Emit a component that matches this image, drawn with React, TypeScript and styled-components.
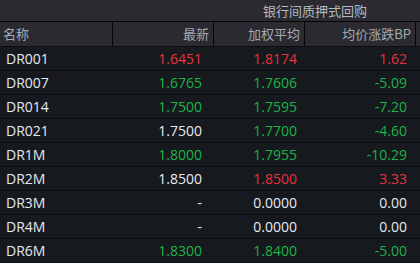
import React, {FC} from 'react';
import styled, {createGlobalStyle} from "styled-components";

type Tone = 'up' | 'down' | 'flat';

interface Row {
    name: string;
    last: string;
    lastTone: Tone;
    avg: string;
    avgTone: Tone;
    bp: string;
    bpTone: Tone;
}

const rows: Row[] = [
    {name: 'DR001', last: '1.6451', lastTone: 'up', avg: '1.8174', avgTone: 'up', bp: '1.62', bpTone: 'up'},
    {name: 'DR007', last: '1.6765', lastTone: 'down', avg: '1.7606', avgTone: 'down', bp: '-5.09', bpTone: 'down'},
    {name: 'DR014', last: '1.7500', lastTone: 'down', avg: '1.7595', avgTone: 'down', bp: '-7.20', bpTone: 'down'},
    {name: 'DR021', last: '1.7500', lastTone: 'flat', avg: '1.7700', avgTone: 'down', bp: '-4.60', bpTone: 'down'},
    {name: 'DR1M', last: '1.8000', lastTone: 'down', avg: '1.7955', avgTone: 'down', bp: '-10.29', bpTone: 'down'},
    {name: 'DR2M', last: '1.8500', lastTone: 'flat', avg: '1.8500', avgTone: 'up', bp: '3.33', bpTone: 'up'},
    {name: 'DR3M', last: '-', lastTone: 'flat', avg: '0.0000', avgTone: 'flat', bp: '0.00', bpTone: 'flat'},
    {name: 'DR4M', last: '-', lastTone: 'flat', avg: '0.0000', avgTone: 'flat', bp: '0.00', bpTone: 'flat'},
    {name: 'DR6M', last: '1.8300', lastTone: 'down', avg: '1.8400', avgTone: 'down', bp: '-5.00', bpTone: 'down'},
];

const App: FC = () => {
    return (
        <>
            <GlobalStyle/>
            <Board>
                <TitleBar>
                    <span/>
                    <Title>银行间质押式回购</Title>
                </TitleBar>
                <HeaderRow>
                    <HeadCell $align="left">名称</HeadCell>
                    <HeadCell>最新</HeadCell>
                    <HeadCell>加权平均</HeadCell>
                    <HeadCell>均价涨跌BP</HeadCell>
                    <HeadCell/>
                </HeaderRow>
                {rows.map(r => (
                    <DataRow key={r.name}>
                        <Name>{r.name}</Name>
                        <Value $tone={r.lastTone} $pad={12}>{r.last}</Value>
                        <Value $tone={r.avgTone} $pad={8}>{r.avg}</Value>
                        <Value $tone={r.bpTone} $pad={9}>{r.bp}</Value>
                        <span/>
                    </DataRow>
                ))}
            </Board>
        </>
    );
};

const GlobalStyle = createGlobalStyle`
  html, body {
    margin: 0;
    padding: 0;
    background: #16191e;
  }
  body {
    font-family: "Open Sans", "Noto Sans CJK SC", sans-serif;
  }
`

const toneColor = {
    up: '#e8323c',
    down: '#1db446',
    flat: '#e6e9ef',
}

const COLS = '113px 101px 91px 111px 4px';

const Board = styled.div`
  width: 420px;
  height: 263px;
  overflow: hidden;
  background: #16191e;
  display: flex;
  flex-direction: column;
`

const TitleBar = styled.div`
  height: 21px;
  display: grid;
  grid-template-columns: 210px 210px;
  background: #2a2a30;
  border-bottom: 1px solid #050506;
`

const Title = styled.div`
  text-align: center;
  font-family: "Noto Sans CJK SC", sans-serif;
  font-size: 13px;
  line-height: 21px;
  color: #b4bac2;
`

const HeaderRow = styled.div`
  height: 24px;
  display: grid;
  grid-template-columns: ${COLS};
  background: #2a2a30;
  border-bottom: 1px solid #0c0e11;
`

const HeadCell = styled.div<{ $align?: 'left' | 'right' }>`
  text-align: ${p => p.$align || 'right'};
  padding: ${p => p.$align === 'left' ? '0 0 0 3px' : '0 4px 0 0'};
  border-right: 1px solid #050506;
  font-family: "Noto Sans CJK SC", sans-serif;
  font-size: 13px;
  line-height: 24px;
  color: #a3abb3;
  white-space: nowrap;
  overflow: hidden;
  &:last-child {
    border-right: none;
  }
`

const DataRow = styled.div`
  height: 23px;
  flex: none;
  display: grid;
  grid-template-columns: ${COLS};
  align-items: center;
  border-bottom: 1px solid #0c0e11;
  font-size: 14px;
`

const Name = styled.div`
  padding-left: 6px;
  color: #e6e9ef;
`

const Value = styled.div<{ $tone: Tone; $pad: number }>`
  text-align: right;
  padding-right: ${p => p.$pad}px;
  color: ${p => toneColor[p.$tone]};
`

export default App;
